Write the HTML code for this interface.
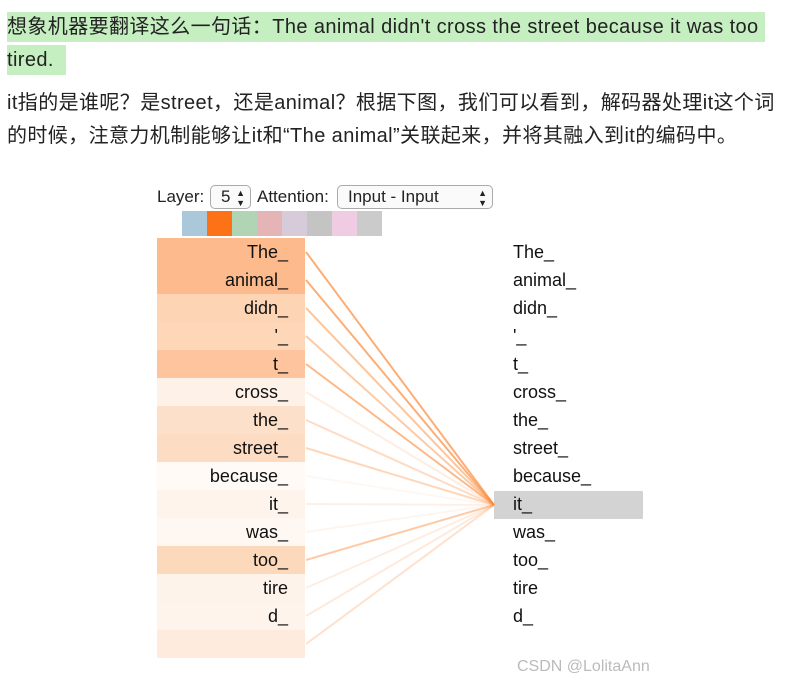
<!DOCTYPE html>
<html><head><meta charset="utf-8"><style>
body{margin:0;width:787px;height:695px;background:#fff;position:relative;overflow:hidden;font-family:"Liberation Sans","Noto Sans CJK SC",sans-serif;color:#222}
.p{position:absolute;left:7px;font-size:20px;line-height:33px;width:778px;letter-spacing:0.4px}
.hl{background:#c6efc1;padding:4px 0}
.l{position:absolute;left:157px;width:148px;height:28px;text-align:right;font-size:18px;line-height:28px;box-sizing:border-box;padding-right:17px;color:#111;font-family:"Liberation Sans",sans-serif}
.r{position:absolute;left:513px;font-size:18px;line-height:28px;color:#111;font-family:"Liberation Sans",sans-serif}
.sw{position:absolute;top:211px;width:25px;height:25px}
.sel{position:absolute;height:24px;border:1px solid #aaa;border-radius:5px;top:185px;font-size:17px;line-height:22px;box-sizing:border-box;padding-left:10px;background:#fafafa;font-family:"Liberation Sans",sans-serif}
</style></head><body>
<div class="p" style="top:11px"><span class="hl">想象机器要翻译这么一句话：The animal didn't cross the street because it was too&nbsp;</span><br><span class="hl">tired.&nbsp;&nbsp;</span></div>
<div class="p" style="top:87px">it指的是谁呢？是street，还是animal？根据下图，我们可以看到，解码器处理it这个词<br>的时候，注意力机制能够让it和“The animal”关联起来，并将其融入到it的编码中。</div>
<div style="position:absolute;left:157px;top:187px;font-size:17px;font-family:'Liberation Sans',sans-serif">Layer:</div>
<div class="sel" style="left:210px;width:41px">5 <span style="font-size:9px;position:absolute;right:5px;line-height:10px;top:2px">▲<br>▼</span></div>
<div style="position:absolute;left:257px;top:187px;font-size:17px;font-family:'Liberation Sans',sans-serif">Attention:</div>
<div class="sel" style="left:337px;width:156px">Input - Input<span style="font-size:9px;position:absolute;right:5px;line-height:10px;top:2px">▲<br>▼</span></div>
<div class="sw" style="left:182px;background:#aac8da"></div><div class="sw" style="left:207px;background:#fd7117"></div><div class="sw" style="left:232px;background:#b0d4b4"></div><div class="sw" style="left:257px;background:#e5b4b6"></div><div class="sw" style="left:282px;background:#d7cad9"></div><div class="sw" style="left:307px;background:#c4c4c4"></div><div class="sw" style="left:332px;background:#f0cce2"></div><div class="sw" style="left:357px;background:#cbcbcb"></div>
<div style="position:absolute;left:494px;top:491px;width:149px;height:28px;background:#d3d3d3"></div>
<svg width="787" height="695" style="position:absolute;left:0;top:0">
<g stroke="#fd8c3c" stroke-width="2">
<line x1="306" y1="252" x2="494" y2="505" opacity=".7"/><line x1="306" y1="280" x2="494" y2="505" opacity=".7"/><line x1="306" y1="308" x2="494" y2="505" opacity=".5"/><line x1="306" y1="336" x2="494" y2="505" opacity=".45"/><line x1="306" y1="364" x2="494" y2="505" opacity=".6"/><line x1="306" y1="392" x2="494" y2="505" opacity=".15"/><line x1="306" y1="420" x2="494" y2="505" opacity=".3"/><line x1="306" y1="448" x2="494" y2="505" opacity=".35"/><line x1="306" y1="476" x2="494" y2="505" opacity=".05"/><line x1="306" y1="504" x2="494" y2="505" opacity=".12"/><line x1="306" y1="532" x2="494" y2="505" opacity=".08"/><line x1="306" y1="560" x2="494" y2="505" opacity=".45"/><line x1="306" y1="588" x2="494" y2="505" opacity=".15"/><line x1="306" y1="616" x2="494" y2="505" opacity=".18"/><line x1="306" y1="644" x2="494" y2="505" opacity=".25"/>
</g></svg>
<div class="l" style="top:238px;background:#fdbb8d">The_</div>
<div class="l" style="top:266px;background:#fdbb8d">animal_</div>
<div class="l" style="top:294px;background:#fdd5b5">didn_</div>
<div class="l" style="top:322px;background:#fdd7b8">'_</div>
<div class="l" style="top:350px;background:#fdc49e">t_</div>
<div class="l" style="top:378px;background:#fef1e8">cross_</div>
<div class="l" style="top:406px;background:#fde0c9">the_</div>
<div class="l" style="top:434px;background:#fddcc4">street_</div>
<div class="l" style="top:462px;background:#fffaf6">because_</div>
<div class="l" style="top:490px;background:#fef4ec">it_</div>
<div class="l" style="top:518px;background:#fef7f2">was_</div>
<div class="l" style="top:546px;background:#fdd9bc">too_</div>
<div class="l" style="top:574px;background:#fef3eb">tire</div>
<div class="l" style="top:602px;background:#fef4ec">d_</div>
<div class="l" style="top:630px;background:#feebdd"></div>
<div class="r" style="top:238px">The_</div><div class="r" style="top:266px">animal_</div><div class="r" style="top:294px">didn_</div><div class="r" style="top:322px">'_</div><div class="r" style="top:350px">t_</div><div class="r" style="top:378px">cross_</div><div class="r" style="top:406px">the_</div><div class="r" style="top:434px">street_</div><div class="r" style="top:462px">because_</div><div class="r" style="top:490px">it_</div><div class="r" style="top:518px">was_</div><div class="r" style="top:546px">too_</div><div class="r" style="top:574px">tire</div><div class="r" style="top:602px">d_</div>
<div style="position:absolute;left:517px;top:658px;font-size:16px;color:#bbb;font-family:'Liberation Sans',sans-serif">CSDN @LolitaAnn</div>
</body></html>
